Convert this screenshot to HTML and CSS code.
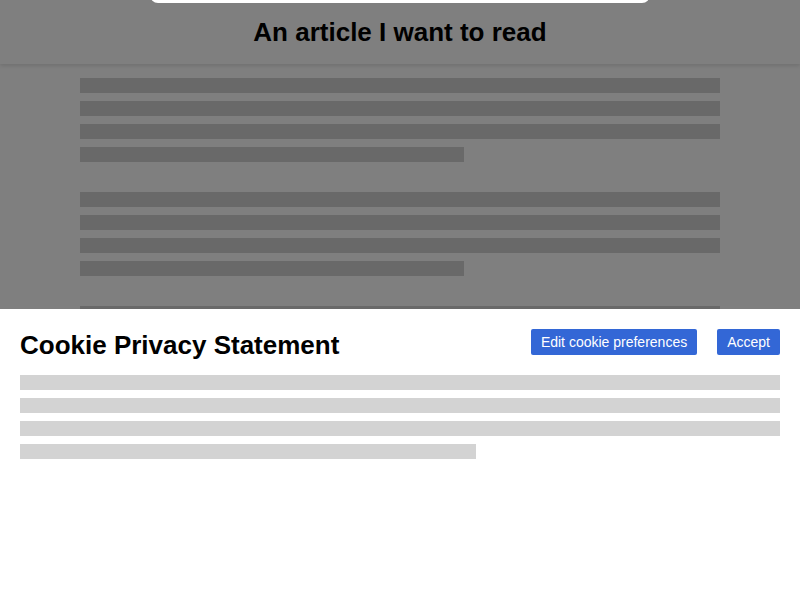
FILE: index.html
```html
<!DOCTYPE html>
<html>
<head>
<meta charset="utf-8">
<link rel="stylesheet" href="styles.css">
</head>
<body>
<header class="site-header">
  <h1 class="site-title">An article I want to read</h1>
</header>
<main class="article">
  <div class="para">
    <div class="line"></div><div class="line"></div><div class="line"></div><div class="line short"></div>
  </div>
  <div class="para">
    <div class="line"></div><div class="line"></div><div class="line"></div><div class="line short"></div>
  </div>
  <div class="para">
    <div class="line"></div><div class="line"></div><div class="line"></div><div class="line short"></div>
  </div>
</main>
<div class="overlay"></div>
<div class="top-panel"></div>
<section class="cookie-banner">
  <div class="cookie-head">
    <h2 class="cookie-title">Cookie Privacy Statement</h2>
    <div class="cookie-actions">
      <button class="btn">Edit cookie preferences</button>
      <button class="btn">Accept</button>
    </div>
  </div>
  <div class="cookie-text">
    <div class="line"></div><div class="line"></div><div class="line"></div><div class="line short"></div>
  </div>
</section>
</body>
</html>
```

FILE: styles.css
```css
html, body {
  margin: 0;
  padding: 0;
  height: 100%;
  overflow: hidden;
  background: #fff;
  font-family: "Liberation Sans", Arial, sans-serif;
}

.site-header {
  height: 64px;
  display: flex;
  align-items: center;
  justify-content: center;
  background: #fff;
  box-shadow: 0 2px 4px rgba(0, 0, 0, 0.12);
  position: relative;
}

.site-title {
  margin: 0;
  font-size: 26px;
  line-height: 31px;
  font-weight: bold;
  color: #000;
}

.article {
  padding: 14px 80px;
  display: flex;
  flex-direction: column;
  gap: 30px;
}

.para, .cookie-text {
  display: flex;
  flex-direction: column;
  gap: 8px;
}

.line {
  height: 15px;
  background: #d3d3d3;
}

.line.short {
  width: 60%;
}

.overlay {
  position: fixed;
  inset: 0;
  background: rgba(0, 0, 0, 0.5);
}

.top-panel {
  position: fixed;
  top: -40px;
  left: 150px;
  width: 500px;
  height: 43px;
  background: #fff;
  border-radius: 8px;
}

.cookie-banner {
  position: fixed;
  left: 0;
  right: 0;
  bottom: 0;
  height: 291px;
  box-sizing: border-box;
  background: #fff;
  padding: 20px;
}

.cookie-head {
  display: flex;
  align-items: flex-start;
  justify-content: space-between;
  height: 26px;
  margin-bottom: 20px;
}

.cookie-title {
  margin: 0;
  font-size: 26px;
  line-height: 32px;
  font-weight: bold;
  color: #000;
}

.cookie-actions {
  display: flex;
  gap: 20px;
}

.btn {
  height: 26px;
  padding: 0 10px;
  border: none;
  border-radius: 2px;
  background: #3367d6;
  color: #fff;
  font-family: "Liberation Sans", Arial, sans-serif;
  font-size: 14px;
  cursor: pointer;
}
```
